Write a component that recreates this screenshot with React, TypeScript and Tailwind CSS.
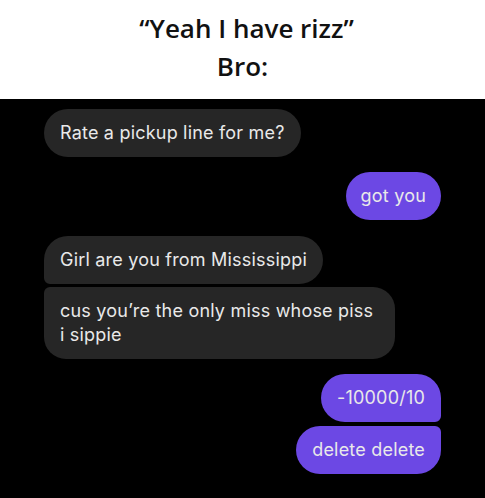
import React from "react";

const grey = "bg-[#262626]";
const purple = "bg-[#6c48e4]";

export default function App() {
  return (
    <div className="w-[485px] h-[498px] flex flex-col bg-black overflow-hidden" style={{ fontFamily: "Inter, 'Liberation Sans', Arial, sans-serif" }}>
      <div className="h-[99px] bg-white flex flex-col items-center pt-[9px] text-[#111]" style={{ fontFamily: "'Open Sans', 'Liberation Sans', sans-serif" }}>
        <div className="text-[26px] leading-[38px] font-semibold pl-[8px]">“Yeah I have rizz”</div>
        <div className="text-[26px] leading-[38px] font-semibold">Bro:</div>
      </div>
      <div className="flex-1 flex flex-col px-[44px] pt-[10px] text-[18px] leading-[24px] tracking-[0.2px] text-[#e9e9e9]">
        <div className={`self-start ${grey} rounded-[24px] px-4 py-3`}>Rate a pickup line for me?</div>
        <div className={`self-end ${purple} rounded-[24px] px-[15px] py-3 mt-[15px]`}>got you</div>
        <div className={`self-start ${grey} rounded-[24px] rounded-bl-[6px] px-4 py-3 mt-[16px]`}>Girl are you from Mississippi</div>
        <div className={`self-start ${grey} rounded-[22px] rounded-tl-[6px] pl-4 pr-5 py-3 mt-[3px] w-[351px]`}>cus you’re the only miss whose piss<br />i sippie</div>
        <div className={`self-end ${purple} rounded-[24px] rounded-br-[6px] px-4 py-3 mt-[15px]`}>-10000/10</div>
        <div className={`self-end ${purple} rounded-[24px] rounded-tr-[6px] px-4 py-3 mt-[4px]`}>delete delete</div>
      </div>
    </div>
  );
}
